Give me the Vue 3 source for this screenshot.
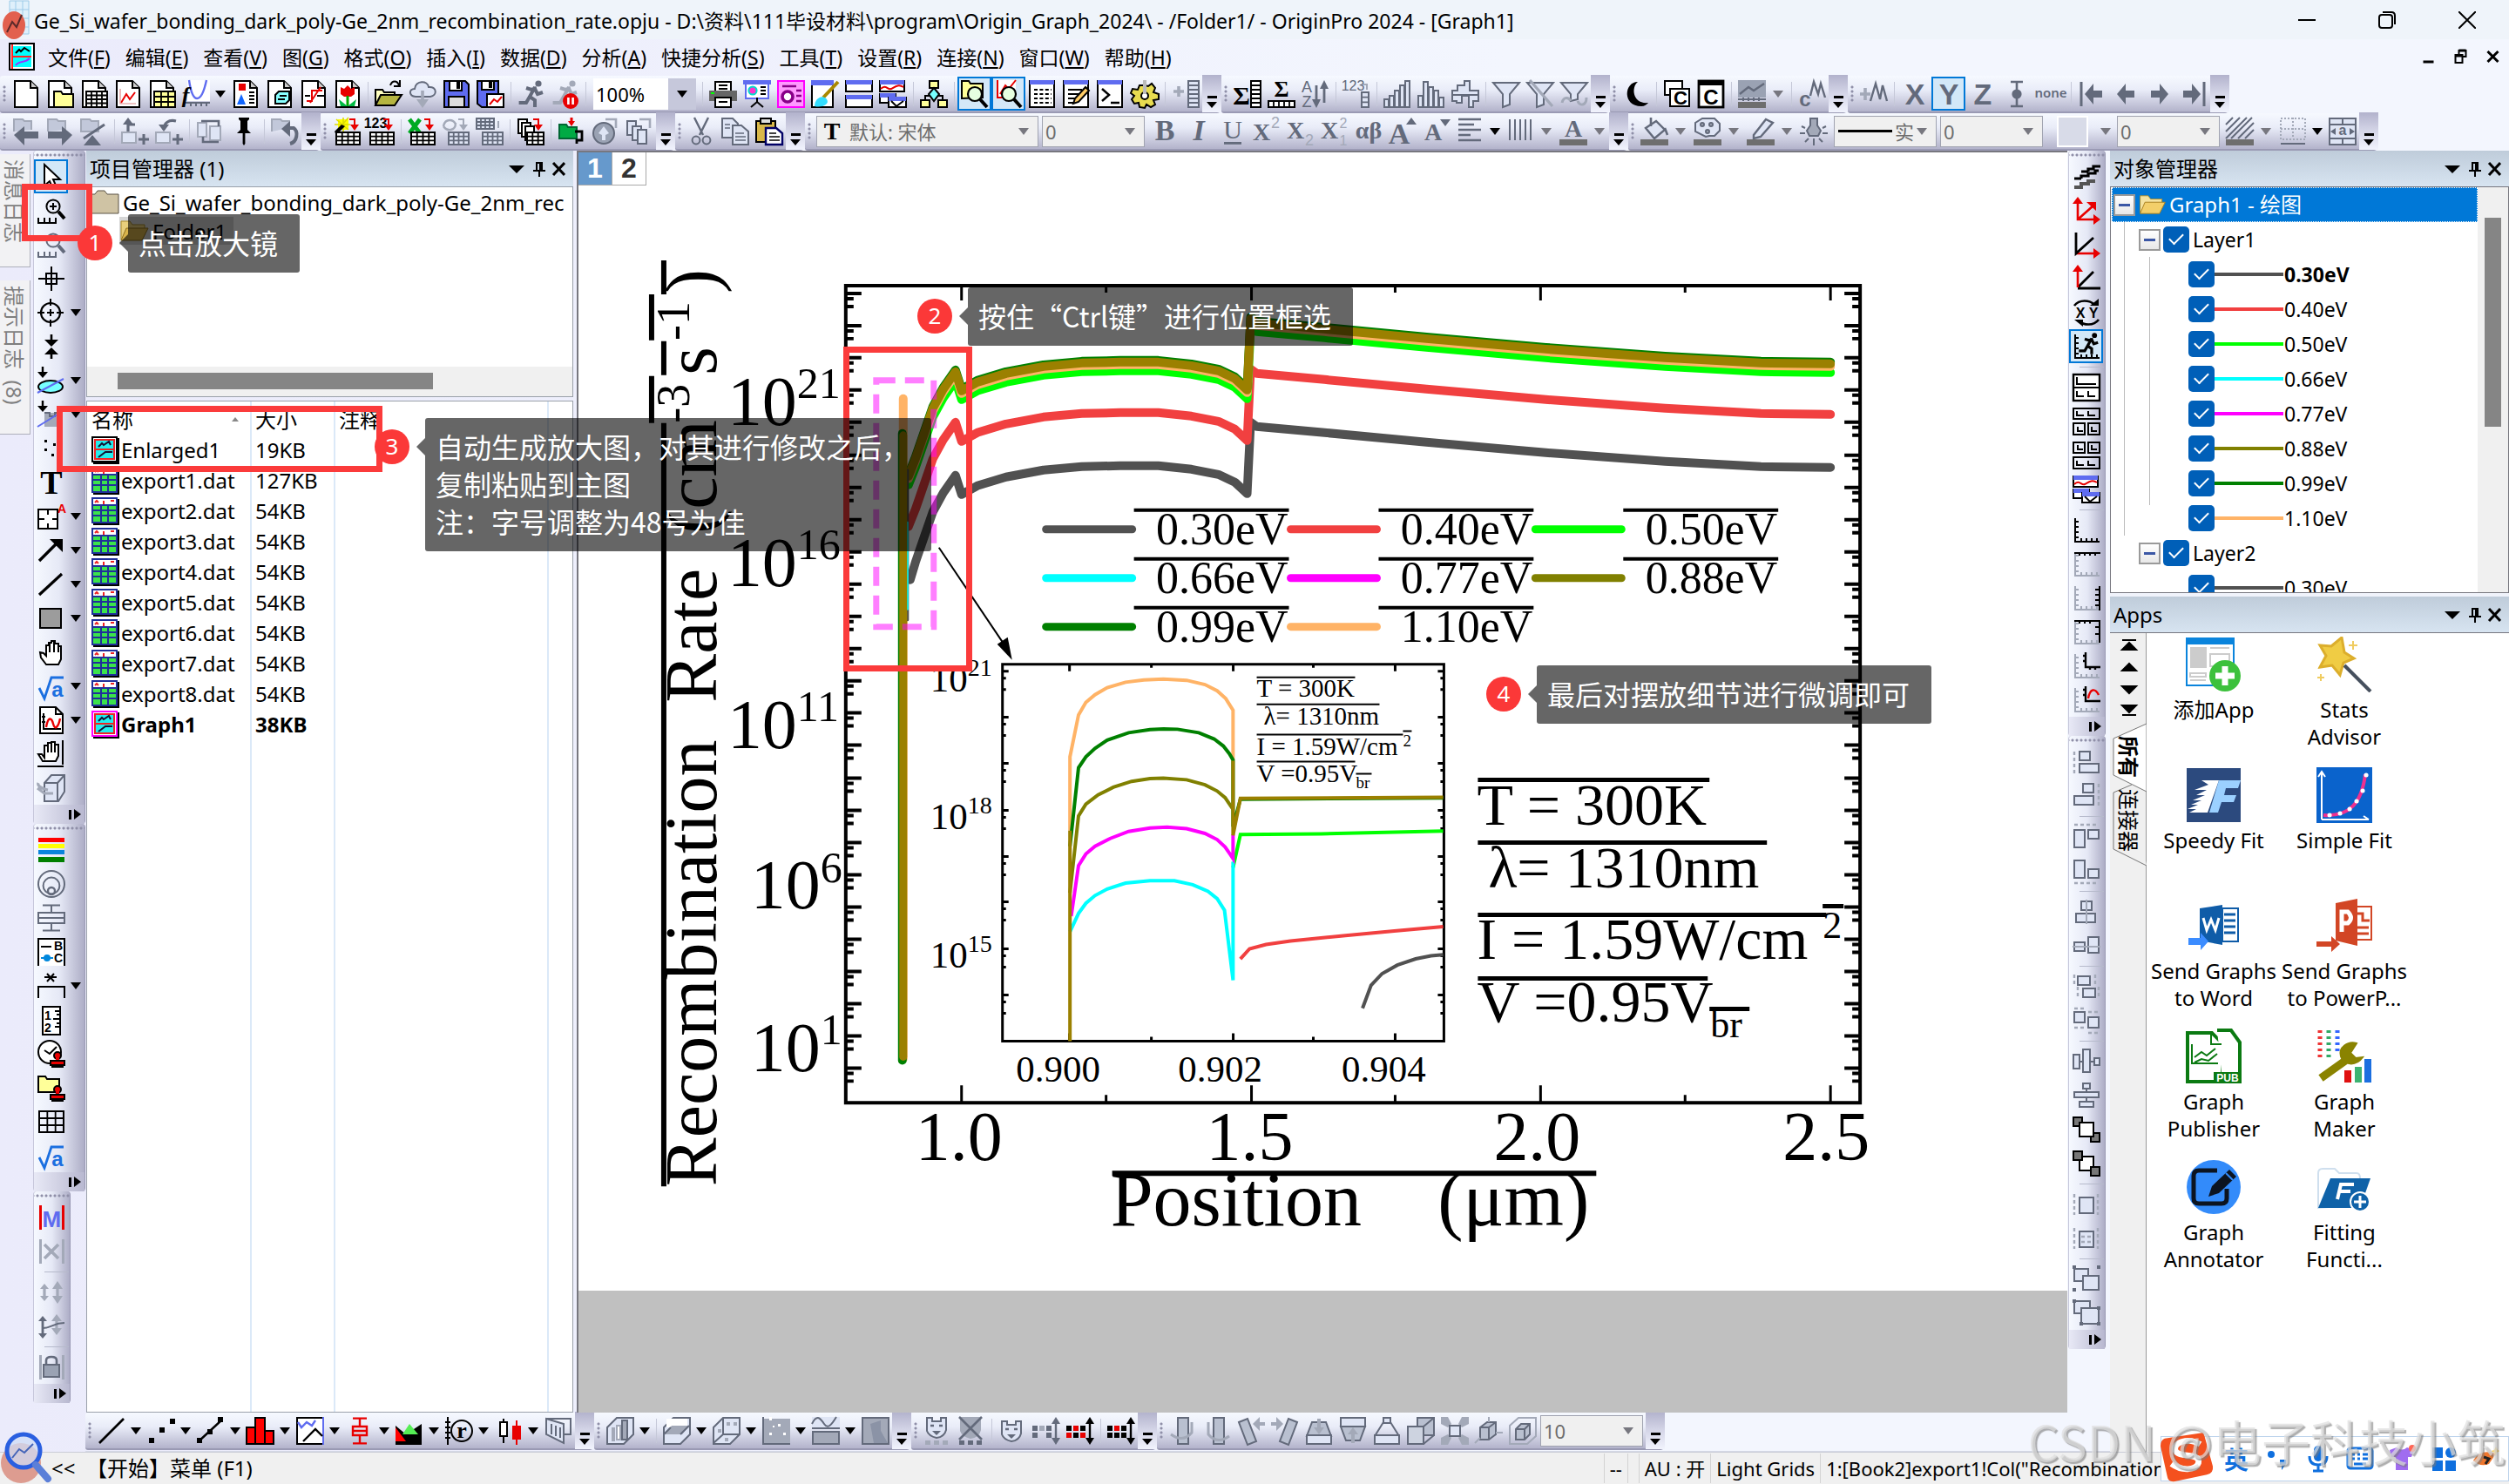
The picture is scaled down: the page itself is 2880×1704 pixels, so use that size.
<script setup>
import { h } from 'vue'

/* ---------- icon drawing helpers (16 x 16 grid) ---------- */
const K = '#000', G = '#636a7b', g = '#a3a9b8', F = '#dfe5f5', B = '#5f6cf0', R = '#e80000', Y = '#ffff99'
const p = (d, f = 'none', s = K, w = 1) => `<path d="${d}" fill="${f}" stroke="${s}" stroke-width="${w}"/>`
const f = (d, c = K) => `<path d="${d}" fill="${c}"/>`
const r = (x, y, w, hh, c = K) => `<rect x="${x}" y="${y}" width="${w}" height="${hh}" fill="${c}"/>`
const b = (x, y, w, hh, c = 'none', s = K, sw = 1) => `<rect x="${x}" y="${y}" width="${w}" height="${hh}" fill="${c}" stroke="${s}" stroke-width="${sw}"/>`
const c = (x, y, q, fill = 'none', s = K, w = 1) => `<circle cx="${x}" cy="${y}" r="${q}" fill="${fill}" stroke="${s}" stroke-width="${w}"/>`
const t = (x, y, s, size, fill = K, fam = 'Liberation Sans', wt = 400, st = 'normal') => `<text x="${x}" y="${y}" text-anchor="middle" font-size="${size}" fill="${fill}" font-family="${fam}" font-weight="${wt}" font-style="${st}">${s}</text>`
const page = p('M1.5.5h9l4 4v11h-13z', '#fff') + p('M10.5.5v4h4', '#ccc')
const grid = (x, y, w, hh, nx, ny, fill = '#fff', s = K) => {
  let d = ''
  for (let i = 1; i < nx; i++) d += `M${x + (w * i) / nx} ${y}v${hh}`
  for (let i = 1; i < ny; i++) d += `M${x} ${y + (hh * i) / ny}h${w}`
  return b(x, y, w, hh, fill, s) + p(d, 'none', s, 0.9)
}
const lens = (col = K, glass = '#e6ffe0') => c(8, 8, 4, glass, col, 1.1) + p('M11 11l4 4.5', 'none', col, 2)
const runner = (col) => p('M11 4.5L8 5.5l-3-1M10 4L7 9.5l3 2v4M7 9.5l-2 3.5H.8M10 5l1.5 3 3-1', 'none', col, 2) + c(12, 2, 1.8, col, col, 0)
const win = (x, y, w, hh) => b(x, y, w, hh, '#fff') + r(x, y - 0.5, w, 2.5, B)
const stamp = c(11.5, 9, 2, R) + f('M10.5 10h2v2.500h-2z', R) + b(7.5, 12, 8, 2.500, R) + p('M8 15.500h7', 'none', K)
const cubeG = (extra = '') => p('M.5 6L6 .5h9.5V10L10 15.500H.5z', F, G) + extra
const axes = (c1, c2, inner = '') => p('M1.500 1v13.500h14', 'none', c1) + p('M1.500 3h2M1.500 6h2M1.500 9h2M1.500 12h2M5 14.500v-2M8 14.500v-2M11 14.500v-2M14 14.500v-2', 'none', c2) + inner
const sqrt = p('M1 9l3 6L8 3h7', 'none', '#1b6fe0', 1.400) + t(11.5, 14, 'a', 12, '#1b6fe0', 'Liberation Sans', 700)
const boxes = (list, extra = '') => list.map((q) => b(q[0], q[1], q[2], q[3], F, G)).join('') + extra
const dash = (d) => `<path d="${d}" fill="none" stroke="${g}" stroke-width="1.200" stroke-dasharray="2 1.500"/>`
const down = (col) => p('M9.500 1h3v4', 'none', col) + f('M10 4h5l-2.500 3.500z', col)

const I = {
  new: page,
  nfold: page + p('M4.500 15.500v-9h4l1 1.500h6v7.500z', Y),
  nwks: page + grid(3.500, 6.500, 12, 9, 4, 4),
  ngraph: page + p('M4 13l3-5 2 3 3-4', 'none', R) + p('M3.500 5v8.500h9', 'none', '#d88', 0.6),
  nmtx: page + grid(3.500, 6.500, 12, 9, 3, 3, Y),
  func: r(3, 0, 13, 12, '#fff') + p('M4 0c2 14 7 14 10 0', 'none', B, 1.200) + p('M2 13h14M5 15v-2M8 15v-2M11 15v-2M14 15v-2', 'none', G) + t(2, 13, 'f', 13, K, 'Liberation Serif', 700, 'italic'),
  tmpl: page + r(4, 2, 4, 4, R) + f('M3 14l2.500-6L8 14z', '#16f') + p('M10 7h3M10 9h3M10 11h3M10 13h3', 'none', K, 1),
  notes: page + p('M5.500 13.500v-5l2-2h6v5l-2 2z', '#8ff') + p('M8 9h4M7 11h4'),
  lay: page + p('M4 12h3V6h6M6 13l6-9', 'none', R) + p('M3 9h3M10 9h4', 'none', K, 1),
  flower: page + f('M4 4l2 1 2-2 2 2 2-1v4l-2 1.500H6L4 8z', R) + p('M8 9v6', 'none', '#0a0', 1.500) + f('M3 11l5 4 5-4-1 4H4z', '#0b4'),
  open: p('M.5 14.500v-9h4l1 1.500h6v2', '#ffffc0') + p('M.5 14.500l3-6h12l-4 6z', '#b5b540') + p('M9 3c1-3 4-3 5 0M14.500 0v3.500H11', 'none', K),
  cloud: p('M4 9.500C0 9 0 5 3.500 5 4 0 11 0 11.500 4c5-.5 5 5 1 5.500z', F, G) + p('M8 6v7', 'none', g, 1.800) + f('M4.500 11h7L8 16z', g),
  save: p('M1 .5h12l2 2v13H1z', B) + b(4, .5, 7, 5.500, '#fff') + r(8, 1, 2, 4) + b(3.500, 9.500, 9, 6, '#ddd'),
  savet: p('M.5.5h12v15H3l-2.500-2z', B) + b(3, .5, 7, 5, '#fff') + r(7, 1, 2, 3.500) + b(6, 8, 9.500, 7.500, '#fff') + p('M7.500 14l2.500-3 2 1.500 2.500-3', 'none', R),
  run: runner(G), runstop: runner(g) + c(11, 12, 4, R, R) + p('M9.700 10v4M12.300 10v4', 'none', '#fff', 1.300),
  printer: b(3.500, 1, 9, 6, '#fff') + p('M5.500 3h5M5.500 5h5') + r(0, 6, 16, 6, '#666') + r(1, 7, 2, 1, '#0f0') + b(3.500, 10, 9, 5.500, '#fff') + p('M5.500 12.500h5'),
  slide: r(0, 0, 16, 2.500, B) + b(1.500, 2, 13, 8.500, '#fff', B) + c(5.500, 6, 2.300, '#f3c', '#0dc') + p('M10 4h3M10 6h3M10 8h3M8 10v3M4.500 15.500L8 12.500l3.500 3'),
  poster: b(.5, .5, 15, 15, '#f9f', '#f0f') + c(6, 9.500, 3, '#fff', '#808', 1.800) + p('M3 3.500h8M11 6h3M11 9h3M11 12h3', 'none', '#808', 1.200),
  brush: b(.5, 1, 12, 14.500, '#fff') + r(0, 0, 13, 3, B) + p('M15.500 1L7 10', 'none', '#a80', 2) + f('M2 15c0-5 5-7 7-4s-3 5-7 4z', '#3df'),
  win2: win(.5, .5, 15, 6) + win(.5, 9, 15, 6.500), wincurve: win(.5, .5, 14, 6) + p('M1 5c3-3 4 1 6 0s4-3 7-1', 'none', R) + win(.5, 8, 9, 5) + win(5.500, 10, 10, 5.500) + p('M7 12l3 3 4-3'),
  tree: p('M8 5v4M3 12.500V9h10v3.500') + b(5.500, .5, 5, 4, Y) + p('M8 4.500l3 3.500-3 4-3-4z', '#7ff') + b(.5, 11.500, 5, 4, Y) + b(10.500, 11.500, 5, 4, Y),
  fzoom: p('M.5 10.500V.5h4l1 1.500h7v8z', Y) + lens(), gzoom: r(2, 0, 10, 10, '#fff') + p('M1.500 0v10h3M3 8l3-5 2 2 4-5', 'none', R) + lens(),
  gridwin: win(.5, .5, 14, 15) + `<path d="M3 5.500h10M3 8h10M3 10.500h10M3 13h10" stroke="#000" stroke-dasharray="2 1.200"/>`,
  notewin: win(.5, .5, 14, 15) + p('M3 5.500h8M3 8h6M3 10.500h4M3 13h3') + p('M6 13.500l1-3L13 4l2 2-6 6.500z', '#fc6'),
  console: win(.5, .5, 14, 15) + p('M3 5l4 3.500L3 12M8 13h5', 'none', K, 1.300),
  gear: p('M8 3l2 .5L12 2l2 2.500L13 7l3 1v3l-3 .5L14 14l-2.500 1.500L9 14l-1 2-3-.5L4.500 13 2 13.500.500 11 2 9 0 7.500 1 5l3 .5L5 3z', '#e8dc50') + c(8, 9, 2, '#fff') + r(7, 0, 2, 8, '#bbb'),
  addcol: p('M1 6.500h6M4 3.500v6', 'none', g, 1.800) + grid(9.500, .5, 6, 15, 1, 6, F, G),
  sumcol: t(4.500, 14, 'Σ', 15, K, 'Liberation Serif', 700) + grid(10, .5, 5.500, 15, 1, 6), sum: t(8, 9.500, 'Σ', 13, K, 'Liberation Serif', 700) + grid(.5, 12, 15, 3.500, 5, 1),
  sortaz: t(3, 7, 'A', 9, G) + t(3, 15.500, 'Z', 9, G) + p('M8.500 3v9M13 3v10', 'none', G, 1.400) + f('M6 11h5l-2.500 5zM10.500 5h5L13 0z', G),
  n123: t(6, 6, '123', 8, G) + p('M12 2.500h2v3', 'none', g) + grid(11, 7, 4, 8.500, 1, 3, F, G),
  bars: [[0, 11, 4], [3, 9, 6], [6, 6, 9], [9, 3, 12], [12, .5, 15]].map((q) => b(q[0] + .5, q[1], 2.500, 15.500 - q[1], F, G)).join(''),
  hist: [[0, 9], [3, 1], [6, 4], [9, 6], [12, 10]].map((q) => b(q[0] + .5, q[1], 2.500, 15.500 - q[1], F, G)).join(''),
  hist2: p('M.5 12V6h3V3h4V.5h3V6h5v6h-3v3.500H10V9H6v4H3v-1z', F, G) + p('M0 8.500h16', 'none', G),
  filt: p('M.5 1.500h15L10 8v6l-4 1.500V8z', F, G), filtx: p('M.5 1.500h15L10 8v6l-4 1.500V8z', F, G) + p('M2 0l13 15', 'none', g, 1.600),
  filtr: p('M.5 1.500h15L10 8v3l-4 1V8z', F, G) + p('M1 13c1-4 4-3 5-1M15 10c0 5-4 5-5 2', 'none', g, 1.500),
  moon: f('M9 1c-8 0-9 14 2 14 2 0 3-1 4-2C6 14 5 4 9 1z'), c2: b(1, .5, 10, 8, '#fff') + b(4, 5, 11, 10, '#fff') + t(10, 14, 'C', 11, K, 'Liberation Sans', 700),
  cbox: b(1, .5, 14, 15, '#fff', K, 1.400) + r(1, 0, 14, 3) + t(8, 14, 'C', 12, K, 'Liberation Sans', 700),
  chartg: r(0, 0, 16, 10, '#9aa2b3') + p('M1 8l5-4 3 2 6-4', 'none', G, 1.200) + p('M0 11h16M3 10v2M6 10v2M9 10v2M12 10v2', 'none', G) + r(0, 12.500, 16, 3.500, '#6e6e6e'),
  cm: t(4, 15, 'c', 12, G, 'Liberation Sans', 700) + p('M7 9l2-8 2.500 7L13 2l2.500 8', 'none', G, 1.200), plusm: p('M0 8h6M3 4.500v7', 'none', g, 1.800) + p('M6 12l3-10 2.500 9L13 3l2.500 9', 'none', G, 1.200),
  X: t(8, 14, 'X', 17, G, 'Liberation Sans', 700), Yk: t(8, 14, 'Y', 17, G, 'Liberation Sans', 700), Z: t(8, 14, 'Z', 17, G, 'Liberation Sans', 700),
  ibeam: p('M4.500 1h7M8 1v14M4.500 15h7', 'none', G, 1.300) + c(8, 8, 2.300, G, G), none: t(8, 10, 'none', 7.500, G, 'Noto Sans', 600),
  first: p('M2 1v14', 'none', G, 1.500) + f('M4 8l5-6v4h5v4H9v4z', G), prev: f('M3 8l5-6v4h5v4H8v4z', G),
  next: f('M13 8L8 2v4H3v4h5v4z', G), last: f('M12 8L7 2v4H2v4h5v4z', G) + p('M14 1v14', 'none', G, 1.500),
  back: p('M1 8V1h5l1 1h4v5', '#c2c8da', g) + f('M1 10l6-5v3h8v4H7v4z', G), fwd: p('M1 8V1h5l1 1h4v5', '#c2c8da', g) + f('M15 10L9 5v3H1v4h8v4z', G),
  fup: p('M.5 8V1h5l1 1h4v6z', '#c2c8da', g) + p('M2 12L14 4', 'none', G, 1.500) + f('M2 16l5-6 5 6z', G),
  nup: p('M.5 8.500h8v6h-8z', F, g) + p('M4 8V4h4', 'none', G, 1.600) + f('M1 4h6L4 0z', G) + p('M10 12.500h6M13 9.500v6', 'none', G, 1.500),
  nup2: p('M.5 8.500h8v6h-8z', F, g) + p('M5 7c0-4 3-6 7-5', 'none', G, 1.600) + f('M2 4h6L5 8z', G) + p('M10 12.500h6M13 9.500v6', 'none', G, 1.500),
  cyc: b(1, 3, 5, 8, F, g) + b(8, 5, 6, 8, F, g) + p('M3 2h10v3M13 14H4v-3', 'none', G, 1.300), pin: f('M5 0h6v1l-1 1v5l2 2H8.700v6l-.7 1-.7-1V9H4l2-2V2L5 1z'),
  undo: p('M.5 8V1h5l1 1h4v4', '#c2c8da', g) + p('M9 6h4c3 2 2 8-2 9', 'none', G, 2) + f('M6 6.500L11 2v9z', G),
  wiz: r(3, 1, 6, 6, '#ff0') + p('M6 0v8M1 4h9M2 1l7 6M9 0L2 8', 'none', '#dd0', .8) + f('M1 8l4-4 2 1-5 5z') + down(R) + grid(2, 8.500, 13.500, 7, 4, 3),
  i123: t(5, 6, '123', 8, K, 'Liberation Sans', 700) + down(R) + grid(2, 8.500, 13.500, 7, 4, 3), xl: p('M1 1l6 8M7 1L1 9', 'none', '#0a2', 2.400) + down(R) + grid(2, 8.500, 13.500, 7, 4, 3),
  re1: p('M1 5c1-5 6-4 7-1M8 3c0 5-5 5-7 2', 'none', g, 1.200) + down(g) + grid(4, 8.500, 11.500, 7, 4, 3, F, G), re2: grid(.5, .5, 10, 6, 4, 3, F, G) + p('M13 2v4', 'none', g) + grid(4, 8.500, 11.500, 7, 4, 3, F, G),
  multi: b(1, 1, 5, 8, '#fff') + b(3, 3, 5, 8, '#fff') + b(5, 5, 5, 8, '#fff') + down(R) + grid(6, 8.500, 9.500, 7, 3, 3),
  db: p('M1 12V4h4l1 1.500h5V12z', '#0a4', '#063') + p('M8 0v3', 'none', R, 1.500) + f('M6 2h4L8 5z', R) + p('M10 8h4v5h-3v2', 'none', K, 1.400),
  globe: c(7, 9, 6, '#9aa2b3', G) + f('M4 9l3-4 3 4-2 1v3H6v-3z', F) + p('M8 1h6v5', 'none', g, 1.300), stack: b(1, 2, 5, 8, F, G) + b(4, 5, 5, 8, F, G) + b(7, 7, 5, 8, F, G) + p('M8 1h6v5', 'none', g, 1.300),
  cut: p('M4 0l5 10M12 0L7 10', 'none', G, 1.200) + c(5, 13, 2.200, 'none', G) + c(11, 13, 2.200, 'none', G),
  copy: p('M.5.5h6l3 3v8h-9z', F, G) + p('M6.500 4.500h5l4 3.500v7.500h-9z', F, G) + p('M8 9h5M8 11h6M8 13h6M2 4h3M2 6h3', 'none', G, .8),
  paste: b(.5, 2, 11, 12, '#d9b84a') + b(3, .5, 6, 3, '#ddd') + p('M6 6h6l3.500 3v6.500H6z', '#fff', '#006', 1.200) + p('M8 9h4M8 11h6M8 13h6', 'none', K, .8),
  bold: t(8, 13, 'B', 17, G, 'Liberation Serif', 700), ital: t(8, 13, 'I', 17, G, 'Liberation Serif', 700, 'italic'), und: t(8, 12, 'U', 15, G, 'Liberation Serif', 400) + r(3, 14, 10, 1.400, G),
  sup: t(5, 13, 'X', 14, G, 'Liberation Serif', 700) + t(13, 6, '2', 9, g), sub: t(5, 12, 'X', 14, G, 'Liberation Serif', 700) + t(13, 16, '2', 9, g), supsub: t(5, 12, 'X', 14, G, 'Liberation Serif', 700) + t(13, 6, '2', 8, g) + t(13, 16, '1', 8, g),
  ab: t(8, 12, 'αβ', 14, G, 'Liberation Serif', 700), Aup: t(6, 15, 'A', 17, G, 'Liberation Serif', 700) + f('M10 4h6l-3-4z', G), Adn: t(6, 13, 'A', 14, G, 'Liberation Serif', 700) + f('M10 1h6l-3 4z', G),
  align: p('M1 1h13M1 4h9M1 7h13M1 10h7M1 13h13', 'none', G, 1.200), vlines: p('M2 1v12M5 1v12M8 1v12M11 1v12M14 1v12', 'none', G, 1), Acol: t(8, 11, 'A', 14, G, 'Liberation Serif', 700) + r(0, 12.500, 16, 3.500, '#6e6e6e'),
  bucket: p('M3 6l6-4 5 5-6 5z', F, G, 1.200) + p('M6 0v5M14 6l1.500 4', 'none', G, 1.300) + r(0, 12.500, 16, 3.500, '#6e6e6e'), palette: p('M5 .5h7l3 3v4l-3 3H9L7 11 1 8V3z', F, G) + c(5, 4, 1, g, G) + c(10, 4, 1, g, G) + c(8, 8, 1, g, G) + r(0, 12.500, 16, 3.500, '#6e6e6e'),
  pen: p('M4 10l7-9 4 2-7 8-4 1z', F, G, 1.200) + r(0, 12.500, 16, 3.500, '#6e6e6e'), bulb: p('M6 .5h4v4l2 3-1.500 3h-5L4 7.500l2-3z', g, G) + p('M0 9h3M13 9h3M1 5l2 1M15 5l-2 1M3 14l2-2M13 14l-2-2M8 12v4', 'none', G),
  hatch: p('M0 4l4-4M0 8l8-8M0 12L12 0M3 12L15 0M7 12l9-9M11 12l5-5', 'none', G, 1) + r(0, 12.500, 16, 3.500, '#6e6e6e'), border: `<path d="M1 .5h14v12H1zM8 0v12M1 6.500h14" fill="none" stroke="${g}" stroke-dasharray="1 1"/>` + p('M1 15h14', 'none', G), cellw: b(.5, .5, 15, 15, F, G) + p('M.5 4h15M.5 12h15M8 0v4M8 12v4', 'none', G) + t(8, 10, 'a', 8, G, 'Liberation Sans', 700) + f('M1 8l3-2v4zM15 8l-3-2v4z', G),
  cursor: p('M4 1v12l3-2.500 2 4.500 2-1-2-4.500h4z', '#fff'), zin: c(9, 5.500, 3.800) + p('M9 3.500v4M7 5.500h4') + p('M12 8.500l3.500 4', 'none', K, 2) + p('M.5 12v3h10v-3M4 12v3M7 12v3'),
  zout: c(9, 5.500, 3.800, 'none', G) + p('M12 8.500l3.500 4', 'none', G, 2) + p('M.5 12v3h10v-3M4 12v3M7 12v3', 'none', G),
  cross: p('M8 1v14M.500 8h15', 'none', K, 1) + b(5, 5, 6, 6), target: c(7.500, 8, 5.500, 'none', K, 1.100) + p('M7.500 0v4M7.500 12v4M0 8h4M11 8h4M7.500 6v4M5.500 8h4'),
  darr: p('M8 1v4M8 11v4', 'none', K, 1.300) + f('M4 4h8L8 8zM4 12.500h8L8 8.500z'), ell: `<ellipse cx="7.500" cy="11.500" rx="7" ry="3.500" fill="#7ff" stroke="#000"/>` + p('M0 15L15 7', 'none', B) + p('M3 0v3', 'none', K, 1.200) + f('M0 3h6L3 6.500z'),
  maskd: r(4, 7, 10, 8, g) + p('M4 7h3v2h3V7h4', 'none', G) + p('M0 15L13 7', 'none', B) + p('M3 0v3', 'none', K, 1.200) + f('M0 3h6L3 6.500z'),
  dots: r(4, 3, 1.500, 1.500) + r(9, 5, 1.500, 1.500) + r(4, 8, 1.500, 1.500) + r(12, 7, 1.500, 1.500) + r(8, 11, 1.500, 1.500) + r(12, 3, 1, 1), T: t(8, 14.500, 'T', 19, K, 'Liberation Serif', 700),
  annot: b(.5, 4, 11, 11, '#fff') + p('M6 4v3M6 12v3M.5 9.500h3M8.500 9.500h3M3 9.500h1') + t(14, 6, 'A', 7, R, 'Liberation Sans', 700), arr: p('M1 14L11 4', 'none', K, 1.700) + f('M7 1.500h7.500V9z'),
  line: p('M1 14L14 2', 'none', K, 1.600), rect: b(1.500, 2.500, 12, 11, '#9c9c9c'), hand: p('M5 15l-3-4-.5-3 2 .5L5 10V4h1.500V2.500H8V1.500h2V3h2v1.500h1.500V12L12 15z', '#fff') + p('M7 3v5M9.500 2v6M12 4v4'),
  sqrt, chartp: p('M1.500.5h9l4 4v11h-13z', '#fff') + p('M10.500.5v4h4M3.500 4v9h10M2.500 6h2M2.500 9h2') + p('M5 12c1-6 3-6 4-2s3 2 4-3', 'none', R, 1.200), handz: p('M3 12L.5 8l2 0L4 10V3h2V1.500h2V1h2v1.500h2V9l-1.500 3z', '#fff') + p('M6 3v4M8 2v5M10 3v4M14.500 0v14M0 15h15'),
  cube: p('M4 5l4-4.500h7.500V10L12 15.500H4z', F, G) + p('M4 5h7.500v10M11.500 5l4-4.500', 'none', G) + p('M6 9C1 8 0 6 .5 5M0 8l4 3h5', 'none', g, 1.600),
  stripes: r(.5, 1, 15, 2.500, '#f00') + r(.5, 4.500, 15, 2.500, '#ff0') + r(.5, 8, 15, 2.500, '#0a84dc') + r(.5, 12, 15, 3, '#008000'), rings: c(8, 8, 7.500, 'none', G) + c(8, 9, 4.700, 'none', G) + c(8, 12, 2, 'none', G, 1.200),
  box3: p('M3 .8h10M8 1v4M8 11v4M3 15.200h10M.5 5h15v6H.5zM.5 8h15', 'none', G), legend: p('M.5 16V.5h15V16', '#fff') + p('M2 5h6') + t(12, 7, 'B', 7, K, 'Liberation Sans', 700) + t(12, 14, 'C', 7, K, 'Liberation Sans', 700) + p('M2 11.500h7', 'none', '#08d') + c(5.500, 11.500, 1.500, '#08d', '#08d'),
  star: p('M4 3h7M5.500 1l4 4.500M9.500 1l-4 4.500M.5 15V8.500h15V15'), ruler: b(3, .5, 10, 16, '#fff') + t(6, 8, '1', 7, K, 'Liberation Sans', 700) + t(6, 15, '2', 7, K, 'Liberation Sans', 700) + p('M10 3h3M11 5h2M9 7.500h4M11 10h2M10 12h3'),
  clock: c(7, 7, 6.500, '#fff') + p('M4 6l3 2 4-4') + stamp, stampf: p('M.5 10.500v-9h4l1 1.500h7v7.500z', '#ff9') + stamp, table: grid(1, 2, 14, 12, 3, 3, 'none'),
  M: r(1, 1, 1.500, 14, R) + r(14, 1, 1.500, 14, R) + t(8.200, 13.500, 'M', 13, B, 'Liberation Sans', 700), Xb: r(1, 1, 1.500, 14, g) + r(14, 1, 1.500, 14, g) + p('M4 4l8 8M12 4l-8 8', 'none', g, 1.800),
  ud: p('M4 5v6M11.500 4v8', 'none', g, 1.600) + f('M1.500 6L4 3l2.500 3zM1.500 10L4 13l2.500-3zM8.500 6L11.500 1.500l3 4.500zM8.500 10l3 4.500 3-4.500z', g), udl: p('M3 4v9', 'none', G, 1.400) + p('M11 3v8', 'none', g, 1.600) + f('M.5 5L3 2l2.500 3zM.5 12L3 15l2.500-3z', G) + f('M8 5l3-4 3 4zM8 9l3 4 3-4z', g) + p('M3 9c5 0 6-3 12.500-3', 'none', G),
  lock: r(1, 1, 1.500, 14, g) + r(14, 1, 1.500, 14, g) + p('M5 7V4q0-2 3-2t3 2v3', 'none', G, 1.300) + b(3.500, 6.500, 9, 7, '#9aa2b3', G),
  plane: `<g stroke-dasharray="4 0">${p('M5 5h4V3.500h3V2h4M1 9h4V7.500h4V6h4V4.500h2', 'none', K, 1.600)}</g>` + p('M1 14h4v-2h4v-1.500h4', 'none', '#555', 2), ax3: p('M3 2v11h11M3 13L12 5', 'none', R, 1.300) + f('M0 4l3-4 3 4zM12 10l4 3-4 3zM8 3h5.500v5z', R), ax2: p('M2 13h11', 'none', R, 1.300) + p('M2 1v12L12 4', 'none', K, 1.400) + f('M12 10l4 3-4 3z', R), ax1: p('M3 13L12 4M3 13.500h13', 'none', K, 1.400) + p('M3 2v11', 'none', R, 1.300) + f('M0 4l3-4 3 4z', R),
  xy: t(4.500, 11, 'X', 8, K, 'Liberation Sans', 700) + t(12, 11, 'Y', 8, K, 'Liberation Sans', 700) + p('M1 4c3-4 9-3 11-1M15 12c-3 4-9 3-11 1', 'none', K, 1.300) + f('M10 4h5V0zM1 12h5v4z'), runax: axes(K, K) + `<g transform="translate(3 0) scale(.8)">${runner(K)}</g>`,
  l1: b(.5, .5, 15, 15, '#fff', K, 1.200) + p('M2.500 2v4h11M0 8h16M2.500 10v3h4M9 10v3h4'), l2: b(.5, .5, 15, 6) + b(.5, 9, 6.500, 6.500) + b(9, 9, 6.500, 6.500) + p('M2.500 2v2.500h4M9 2v2.500h4M3 11v2.500h3M11 11v2.500h3'), l3: b(.5, 9, 15, 6.500) + b(.5, .5, 6.500, 6) + b(9, .5, 6.500, 6) + p('M2.500 11v2.500h4M9 11v2.500h4M3 2v2.500h3M11 2v2.500h3'),
  a1: axes(K, K), a2: axes(g, g, p('M1 1.500h15M4 1v2M7 1v2M10 1v2M13 1v2')), a3: axes(g, g, p('M15.500 1v14M13 3h2M13 6h2M13 9h2M13 12h2')), a4: axes(g, g, p('M1 1.500h14.500V14M4 1v2M7 1v2M10 1v2M13 5h2M13 9h2')),
  a5: axes(g, g, p('M7.500 0v8.500H16M6 2h2M6 5h2M10 8v2M13 8v2', 'none', K, 1.200)), a6: axes(g, g, p('M7.500 0v8.500H16M6 2h2M6 5h2', 'none', K, 1.200) + p('M9 7c1-6 4-6 6-2', 'none', R, 1.200)),
  g1: boxes([[4, 2, 6, 5], [4, 9, 11, 5]], dash('M1 2v13')), g2: boxes([[6, 1, 6, 5], [1, 8, 11, 5]], dash('M15 1v13')), g3: boxes([[1, 4, 6, 10], [9, 4, 6, 5]], dash('M1 1h14')), g4: boxes([[1, 2, 6, 10], [9, 7, 6, 5]], dash('M1 15h14')),
  g5: boxes([[5, 2, 6, 5], [2, 9, 11, 5]], p('M8 1v14', 'none', g)), g6: boxes([[1, 6, 6, 5], [9, 3, 6, 9]], p('M0 8.500h16', 'none', g)), g7: boxes([[3, 2, 7, 5], [6, 9, 7, 5]], dash('M1 1v6M13 1v6M3 8v6M15 8v6')), g8: boxes([[1, 3, 6, 6], [9, 6, 6, 6]], dash('M1 1h6M9 3h6M1 12h6M9 15h6')),
  g9: p('M3 8h11', 'none', G) + boxes([[.5, 4, 3.500, 8], [6, 1, 4, 13], [12.500, 6, 3, 4]]), g10: p('M8 3v11', 'none', G) + boxes([[6, 1, 4, 3], [1, 6, 14, 3], [4, 11.500, 8, 3]]),
  g11: b(.5, 1, 5, 5, '#777') + b(10.500, 10, 5, 5, '#777') + b(4, 4, 8, 8, '#fff'), g12: b(4, 4, 8, 8, '#fff') + b(.5, 1, 5, 5, '#777') + b(10.500, 10, 5, 5, '#777'),
  g13: boxes([[4, 4, 8, 9]], dash('M1 2v12M14.500 2v12')), g14: boxes([[4, 4, 8, 9]], dash('M1 2v12M14.500 2v12M5 7h6M5 10h6')), g15: boxes([[1, 2, 8, 7], [6, 6, 9, 8]], r(0, 0, 2, 2, G) + r(14, 0, 2, 2, G) + r(0, 13, 2, 2, G)), g16: boxes([[1, 1, 9, 7], [5, 5, 10, 9]], r(0, 0, 2, 2, G) + r(4, 13, 2, 2, G) + r(14, 13, 2, 2, G) + r(14, 4, 2, 2, G)),
  p1: p('M1 15L15 1', 'none', K, 1.300), p2: r(1, 12, 3, 3) + r(7, 6, 3, 3) + r(13, 1, 3, 3), p3: p('M1 14L14 2', 'none', K, 1.200) + r(0, 12, 3, 3) + r(6, 7, 3, 3) + r(12, 0, 3, 3), p4: b(0, 6, 5, 9.500, '#f00') + b(5, .5, 5.500, 15, '#f00') + b(10.500, 8, 5, 7.500, '#f00'),
  p5: b(.5, .5, 15, 15, '#fff') + p('M15.500 0v16', 'none', B) + p('M1 3l2 3 3-3 3 2 2-3', 'none', B, 1.200) + p('M4 14l3-3 4-4 4 4', 'none', K, 1.200), p6: p('M4 .8h8M8 1v4M4 5.500h8v5H4zM4 8h8M8 11v4M4 15.200h8', 'none', R, 1.200),
  p7: f('M0 5l6 5 3-2 6-4v12H0z') + f('M0 6l6 8H0z', '#f00') + f('M4 10l4-6 5 6z', '#5e5'), p8: p('M1.500 0v16M0 3h3M0 6h3M0 9h3M0 12h3') + c(9.500, 8, 6) + t(9.500, 12, 'r', 13, K, 'Liberation Serif', 700), p9: p('M5 1v14') + b(3, 3, 4, 8, '#fff') + p('M12.500 2v14', 'none', R) + r(10, 5, 5, 8, R), p10: p('M1 1l10 3v11L1 10z', F, G) + p('M1 1h14v9h-4M4 4v6M6.500 5v6M9 6v6', 'none', G),
  q1: cubeG(b(6, 5, 2, 8, '#fff', g) + b(9, 2, 3, 11, g, G) + p('M4 6v8', 'none', g, 2)), q2: cubeG(r(2, 1, 12, 5, '#fff') + f('M1 10l4-5h10l-4 5z', g) + p('M.5 10l4-4M10 10l5-5', 'none', G)), q3: cubeG(p('M6 .5V10h9.500M6 10L.5 15', 'none', G) + r(8, 3, 2, 2, g) + r(12, 3, 2, 2, g) + r(3, 7, 2, 2, g) + r(7, 12, 2, 2, g)),
  q4: r(1, 1, 15, 14, g) + p('M.5 0v15.500H16', 'none', G) + r(4, 0, 1.500, 2, '#fff') + r(9, 4, 1.500, 1.500, '#fff') + r(4, 9, 1.500, 1.500, '#fff') + r(12, 9, 1.500, 1.500, '#fff') + r(6, 5, 1, 1, '#fff'), q5: r(0, 0, 16, 6, F) + p('M0 4c3-6 5-3 7 0s4 1 7-4M0 6.500h16', 'none', G) + b(.5, 8.500, 15, 7, g, G) + dash('M2 11h12M2 13.500h12'), q6: b(.5, .5, 15, 15, g, G) + f('M5 4l6-2v6l4 7H7z', '#8b93a6'),
  m1: p('M2 .5h3v2h5v-2h3v7q-1 4-5.500 4.500Q3 11 2 8z', F, G) + p('M4 5h2M9 5h2', 'none', G, 1.300) + f('M5 8h5l-2.500 2.500z', G) + r(1, 13.500, 3, 2.500, g) + r(6, 13.500, 3, 2.500, g) + r(11, 13.500, 3, 2.500, g), m2: p('M2 .5h11v7q-1 4-5.500 4.500Q3 11 2 8z', g, g) + p('M1 0l13 13M14 0L1 13', 'none', G, 1.300) + r(1, 13.500, 3, 2.500, G) + r(6, 13.500, 3, 2.500, G) + r(11, 13.500, 3, 2.500, G), m3: p('M2 2.500h3v2h5v-2h3v7q-1 4-5.500 4.500Q3 13 2 10z', F, G) + p('M4 7h2M9 7h2', 'none', G, 1.300) + f('M5 10h5l-2.500 2.500z', G),
  m4: r(0, 5, 3, 3, G) + r(4, 5, 3, 3, g) + r(8, 5, 3, 3, G) + r(0, 9, 3, 3, G) + r(8, 9, 3, 3, G) + p('M13.500 2v12', 'none', G, 1.200) + f('M11 4h5l-2.500-4zM11 12h5l-2.500 4z', G), m5: r(0, 5, 3, 3) + r(4, 5, 3, 3, R) + r(8, 5, 3, 3) + r(0, 9, 3, 3, R) + r(4, 9, 3, 3) + r(8, 9, 3, 3, R) + p('M13.500 2v12', 'none', K, 1.200) + f('M11 4h5l-2.500-4zM11 12h5l-2.500 4z'), m6: r(0, 5, 3, 3) + r(4, 5, 3, 3, R) + r(8, 5, 3, 3) + r(0, 9, 3, 3) + r(4, 9, 3, 3) + r(8, 9, 3, 3) + p('M13.500 2v12', 'none', K, 1.200) + f('M11 4h5l-2.500-4zM11 12h5l-2.500 4z'),
  r1: b(5, .5, 6, 15, '#b9c0d0', G) + p('M1 10q7 5 12-1V3', 'none', g, 1.500), r2: b(6, .5, 6, 15, '#b9c0d0', G) + p('M15 11q-7 5-12-1V3', 'none', g, 1.500), r3: p('M1 3l5-2 5 13-5 2z', '#b9c0d0', G) + f('M16 3h-3V0L9 4l4 4V5h3z', g), r4: p('M15 3l-5-2-5 13 5 2z', '#b9c0d0', G) + f('M0 3h3V0l4 4-4 4V5H0z', g),
  r5: p('M4 3h8l3 8H1z', '#b9c0d0', G) + b(1, 10.500, 14, 5, F, G) + f('M7 1h2v5h2l-3 4-3-4h2z', g), r6: b(1, .5, 14, 5, F, G) + p('M1 5.500h14l-3 8H4z', '#b9c0d0', G) + f('M7 15h2v-5h2L8 6l-3 4h2z', g), r7: p('M6 3L1 11M10 3l5 8', 'none', G) + b(6, .5, 4, 3, F, G) + b(1, 10.500, 14, 5, F, G), r8: b(6, .5, 9.500, 10, '#b9c0d0', G) + b(.5, 5.500, 9, 10, '#cdd3e0', G) + p('M9.500 5.500l6-5M9.500 15.500l6-5', 'none', G), r9: f('M0 0h4l2 4-2 2-4-2zM16 0h-4l-2 4 2 2 4-2zM0 16h4l2-4-2-2-4 2zM16 16h-4l-2-4 2-2 4 2z', g) + b(5, 5, 6, 6, F, G),
  r10: p('M3 6l4-3h5v7l-4 3H3zM3 6h5v7M8 6l4-3', '#b9c0d0', G) + p('M8 0v3M12 9h4M0 15l3-3', 'none', g), r11: p('M.5 5l5-4.500h10V11l-5 4.500H.5z', 'none', g) + p('M4 7l3-3h5v6l-3 3H4zM4 7h5v6M9 7l3-3', '#b9c0d0', G),
}

/* ---------- reusable pieces ---------- */
const Icon = (props) => h('svg', { class: 'ic', viewBox: '0 0 16 16', 'aria-hidden': 'true', innerHTML: I[props.n] || '' })
Icon.props = ['n']

const tri = (cls) => h('span', { class: ['tri', cls] })
const button = (name) => {
  const on = name[0] === '*'
  const n = on ? name.slice(1) : name
  return h('button', { class: ['btn', { on }], type: 'button', 'aria-label': n }, [h(Icon, { n })])
}
const combo = (spec) => {
  const [, text, cls] = spec.split('~')
  return h('span', { class: ['combo', cls] }, [
    cls.includes('tt') ? h('b', { class: 'ttf' }, 'T') : null,
    cls.includes('ls') ? h('i', { class: 'stroke' }) : null,
    h('select', { 'aria-label': cls }, [h('option', text.replace('_', ' '))]),
    tri(cls.includes('zoom') ? '' : 'dim'),
  ])
}
const item = (k) => {
  if (k === '|') return h('span', { class: 'sep' })
  if (k === '>') return h('button', { class: 'drop', type: 'button', 'aria-label': 'more' }, [tri('')])
  if (k === '>>') return h('button', { class: 'drop wide', type: 'button', 'aria-label': 'more' }, [tri('dim')])
  if (k[0] === '~') return combo(k)
  if (k.length > 1 && k.endsWith('>')) return h('span', { class: 'pair' }, [button(k.slice(0, -1)), item('>')])
  return button(k)
}
const ToolBar = (props) =>
  h('div', { class: ['bar', props.side ? 'side' : 'flat'], role: 'toolbar' }, [
    h('span', { class: 'grip' }),
    ...props.t.split(' ').map(item),
    h('button', { class: 'over', type: 'button', 'aria-label': 'options' }, [h('i'), h('b')]),
  ])
ToolBar.props = ['t', 'side']

const topRows = [
  [
    'new nfold nwks ngraph nmtx func > tmpl notes lay flower | open cloud save savet | run runstop | ~100%~zoom | printer slide poster brush win2 wincurve | tree | *fzoom *gzoom gridwin notewin console gear | addcol',
    'sumcol sum sortaz | n123 | bars hist hist2 | filt filtx filtr',
    'moon | c2 cbox | chartg >> | cm',
    'plusm | X *Yk Z ibeam none | first prev next last',
  ],
  [
    'back fwd fup | nup nup2 | cyc pin | undo',
    'wiz i123 | xl re1 re2 | multi | db globe stack',
    'cut copy paste',
    '~默认:_宋体~tt ~0~size bold ital und sup sub supsub ab Aup Adn align > vlines >> Acol >>',
    'bucket >> palette >> pen >> bulb ~实~ls ~0~size ~_~swatch ~0~size hatch >> border > cellw',
  ],
]
const leftBars = [
  '*cursor zin zout cross target> darr ell> maskd> dots T annot> arr> line> rect> hand sqrt> chartp> handz cube',
  'stripes rings box3 legend star> ruler clock stampf table sqrt',
  'M Xb | ud udl | lock',
]
const rightBars = [
  'plane ax3 ax2 ax1 xy *runax | l1 l2 l3 wincurve | a1 a2 a3 a4 a5 a6',
  'g1 g2 | g3 g4 | g5 g6 | g7 g8 | g9 g10 g11 g12 | g13 g14 | g15 g16',
]
const bottomBars = [
  'p1 > p2 > p3 > p4 > p5 > p6 > p7 > p8 > p9 > p10',
  'q1 > | q2 > q3 > q4 > q5 > q6',
  'm1 m2 | m3 m4 m5 | m6',
  'r1 r2 r3 r4 r5 r6 r7 r8 r9 r10 r11 ~10~size',
]

const menus = [['文件', 'F'], ['编辑', 'E'], ['查看', 'V'], ['图', 'G'], ['格式', 'O'], ['插入', 'I'], ['数据', 'D'], ['分析', 'A'], ['快捷分析', 'S'], ['工具', 'T'], ['设置', 'R'], ['连接', 'N'], ['窗口', 'W'], ['帮助', 'H']]

const files = [
  { n: 'Enlarged1', s: '19KB', g: 1 },
  { n: 'export1.dat', s: '127KB' },
  ...[2, 3, 4, 5, 6, 7, 8].map((i) => ({ n: `export${i}.dat`, s: '54KB' })),
  { n: 'Graph1', s: '38KB', g: 1, bold: 1 },
]

const plots = [
  ['0.30eV', '#515151'], ['0.40eV', '#f14040'], ['0.50eV', '#00ff00'], ['0.66eV', '#00ffff'],
  ['0.77eV', '#ff00ff'], ['0.88eV', '#808000'], ['0.99eV', '#008000'], ['1.10eV', '#ffb366'],
]
const apps = [
  ['添加App', 'add'], ['Stats\nAdvisor', 'wand'], ['Speedy Fit', 'speedy'], ['Simple Fit', 'simple'],
  ['Send Graphs\nto Word', 'word'], ['Send Graphs\nto PowerP...', 'ppt'], ['Graph\nPublisher', 'pub'],
  ['Graph\nMaker', 'maker'], ['Graph\nAnnotator', 'annot'], ['Fitting\nFuncti...', 'fit'],
]
const appArt = {
  add: '<rect x="1" y="2" width="54" height="54" fill="#fff" stroke="#0a84dc" stroke-width="2"/><rect y="1" width="56" height="8" fill="#0a84dc"/><rect x="5" y="12" width="19" height="24" fill="#ccc"/><path d="M28 13h22M28 20h22v14H28zM5 42h18v4H5zM5 50h18" fill="none" stroke="#ccc" stroke-width="2"/><circle cx="45" cy="45" r="18" fill="#3cc13c"/><path d="M45 34v22M34 45h22" stroke="#fff" stroke-width="7"/>',
  wand: '<path d="M29 1l3 17 11 7-12 5-4 14-9-11-14 2 7-13L4 10l13 1z" fill="#f0cc44" stroke="#dcae2c" stroke-width="3"/><path d="M32 33l30 30" stroke="#46505e" stroke-width="4"/><path d="M42 5v10M37 10h10M5 43v8M1 47h8" stroke="#f0cc60" stroke-width="2"/>',
  speedy: '<rect x="1" y="1" width="62" height="62" fill="#2c4a7e"/><path d="M18 15h20L25 52H4l8-4H2l12-5H6l12-5H8l14-6H12l12-6H10l16-6z" fill="#fff"/><path d="M38 15h25l-3 9H46l-2 8h14l-3 8H41l-4 12H27z" fill="#9bd0ff"/>',
  simple: '<rect width="64" height="64" fill="#0a63cc"/><path d="M6 60V6M6 60h54M2 11l4-6 4 6M54 56l6 4" stroke="#fff" stroke-width="2" fill="none"/><path d="M8 55c30 2 44-14 48-47" fill="none" stroke="#f03090" stroke-width="4"/><path d="M15 55h.1M27 53h.1M38 48h.1M46 39h.1M53 27h.1M57 9h.1" stroke="#fff" stroke-width="5" stroke-linecap="round"/>',
  word: '<path d="M42 12h18v38H42z" fill="#fff" stroke="#0f5ca8" stroke-width="2"/><path d="M44 19h13M44 26h13M44 33h13M44 40h13" stroke="#0f5ca8" stroke-width="3"/><path d="M16 12l26-4v46l-26-5z" fill="#0f5ca8"/><path d="M20 23l4 14 5-12 5 12 4-14" fill="none" stroke="#fff" stroke-width="3"/><path d="M3 46h14v-6l9 10-9 10v-6H3z" fill="#3b8cff"/>',
  ppt: '<path d="M42 10h21v38H42z" fill="#fff" stroke="#d24625" stroke-width="2"/><path d="M45 18h8v8h8M45 34h15M45 41h15" fill="none" stroke="#d24625" stroke-width="3"/><path d="M22 6l25-5v54l-25-6z" fill="#d24625"/><path d="M29 39V16h7q7 7 0 13h-7" fill="none" stroke="#fff" stroke-width="5"/><path d="M0 50h17v-6l10 9-10 9v-6H0z" fill="#d24625"/>',
  pub: '<path d="M2 5h28l12 12v44H2z" fill="#fff" stroke="#0b7a12" stroke-width="4"/><path d="M36 2h16l10 14v45H42" fill="#fff" stroke="#0b7a12" stroke-width="4"/><path d="M29 5v13h12M7 18v22h30M10 33l8-6 6 4 10-8M10 39l8-4 8 2 10-8" fill="none" stroke="#0b7a12" stroke-width="2"/><rect x="32" y="50" width="32" height="13" fill="#0b7a12"/><text x="48" y="61" font-size="12" font-weight="700" font-family="Liberation Sans" fill="#fff" text-anchor="middle">PUB</text>',
  maker: '<path d="M4 2v34" stroke="#e33" stroke-width="5" stroke-dasharray="3 4"/><path d="M14 2v34" stroke="#3a6" stroke-width="5" stroke-dasharray="3 4"/><path d="M24 2v24" stroke="#36f" stroke-width="5" stroke-dasharray="3 4"/><path d="M5 57l28-20" stroke="#8a8300" stroke-width="9"/><path d="M46 17c-10-3-21 5-18 15s17 12 25 1l-8 1-6-6z" fill="#8a8300" stroke="#8a8300" stroke-width="2"/><rect x="32" y="48" width="8" height="14" fill="#e01010"/><rect x="44" y="44" width="8" height="18" fill="#3cb371"/><rect x="55" y="35" width="8" height="27" fill="#1b6fe0"/>',
  annot: '<circle cx="32" cy="32" r="31" fill="#338bfa"/><path d="M36 13H15q-6 0-6 6v26q0 6 6 6h26q6 0 6-6V34" fill="none" stroke="#0c1420" stroke-width="5"/><path d="M26 43l4-12 20-19 8 8-20 19z" fill="#0c1420"/><path d="M46 16l8 8" stroke="#338bfa" stroke-width="2"/>',
  fit: '<path d="M2 56V16q0-5 5-5h14l5 5h20q4 0 4 6v30z" fill="#fff" stroke="#cfdfee" stroke-width="2"/><path d="M16 22h46L50 56H2z" fill="#0f62a8"/><path d="M24 46l4-17h15M26 37h13" fill="none" stroke="#fff" stroke-width="4"/><circle cx="50" cy="49" r="11" fill="#0f62a8" stroke="#fff" stroke-width="2"/><path d="M50 42v14M43 49h14" stroke="#fff" stroke-width="3"/>',
}

/* ---------- plot geometry ---------- */
const decades = Array.from({ length: 25 }, (_, i) => 337 + Math.round(i * 37.1))
const yTicks = decades.map((y) => `M970 ${y}h18M970 ${y + 6}h9M970 ${y + 15}h9M2135 ${y}h-18M2135 ${y + 6}h-9M2135 ${y + 15}h-9`).join('')
const xTicks = [1103, 1436, 1768, 2101].map((x) => `M${x} 1267v-20M${x} 328v17`).join('') + [1269, 1601, 1934].map((x) => `M${x} 1267v-9M${x} 328v8`).join('')
const inTicks = [771, 824, 877, 931, 984, 1036, 1090, 1143].map((y) => `M1150 ${y}h7M1150 ${y + 8}h4M1150 ${y + 21}h4M1657 ${y}h-7M1657 ${y + 8}h-4M1657 ${y + 21}h-4`).join('')
  + [1227, 1415, 1601].map((x) => `M${x} 1196v-9M${x} 763v8`).join('') + [1321, 1507].map((x) => `M${x} 1196v-5M${x} 763v4`).join('')
const base = [[1044, 666], [1050, 646], [1060, 617], [1070, 588], [1082, 566], [1096, 546], [1103, 568], [1121, 558], [1154, 548], [1197, 540], [1241, 536], [1285, 535], [1329, 535], [1367, 539], [1398, 545], [1417, 554], [1431, 567], [1435, 485], [1442, 490], [1520, 497], [1637, 508], [1774, 520], [1911, 530], [2021, 536], [2101, 537]]
const shifted = (dy) => base.map(([x, y], i) => `${x - (i === 0 && dy > 50 ? 2 : 0)},${y - dy}`).join(' ')
const curves = [[0, '#515151'], [61, '#f14040'], [109, '#00ff00'], [116, '#ffb366'], [121, '#008000'], [119, '#9b8000']].map(([dy, col]) => ({ d: shifted(dy), col }))
const insetCurves = [
  ['#ffb366', '809,480 809,290 823,182 835,150 850,130 870,112 900,98 930,92 962,90 1000,93 1030,104 1050,120 1064,140 1076,170 1076,300'],
  ['#008000', '809,520 823,318 835,290 850,268 870,247 905,228 940,220 962,218 985,219 1020,228 1045,244 1060,262 1070,282 1076,298 1076,470 1088,399 1420,396'],
  ['#808000', '809,640 823,442 835,412 855,388 880,368 910,353 940,346 962,345 1000,349 1030,362 1050,378 1063,395 1076,425'],
  ['#00ff00', '1076,575 1088,490 1220,488 1420,481'],
  ['#00ffff', '809,740 823,693 835,667 850,647 870,630 900,615 940,609 980,609 1010,619 1035,636 1050,655 1062,685 1076,865 1076,560'],
  ['#ff00ff', '811,700 823,570 835,540 850,520 875,500 905,482 940,473 968,471 1000,475 1030,487 1050,503 1063,522 1070,538 1076,552 1076,490'],
  ['#9b8000', '809,1022 809,480'],
  ['#9b8000', '1076,300 1076,492 1088,397 1420,394'],
  ['#f14040', '1088,810 1103,784 1130,773 1170,764 1260,750 1340,738 1420,727'],
  ['#515151', '1288,937 1302,878 1320,848 1345,826 1375,810 1400,802 1420,799'],
]
const yLabels = [[834, 488, '21'], [834, 673, '16'], [834, 859, '11'], [861, 1044, '6'], [861, 1231, '1']]
const inLabels = [[1067, 794, '21'], [1067, 952, '18'], [1067, 1112, '15']]
const legendPos = plots.map(([n, col], i) => ({ n, col, x: 1195 + (i % 3) * 281, y: 608 + Math.floor(i / 3) * 56 }))
</script>

<template>
  <div class="app">
    <header class="title">
      <svg class="logo" viewBox="0 0 32 56"><path d="M9 2h22v38H9z" fill="#dff0fb" stroke="#9ccbe8" /><path d="M16 2v38M24 2v38M9 12h22M9 22h22M9 32h22" stroke="#9ccbe8" /><ellipse cx="14" cy="30" rx="13" ry="16" fill="#e2604e" /><path d="M6 38l6-12 5 6 6-14" fill="none" stroke="#5b2a2a" stroke-width="2" /></svg>
      <h1>Ge_Si_wafer_bonding_dark_poly-Ge_2nm_recombination_rate.opju - D:\资料\111毕设材料\program\Origin_Graph_2024\ - /Folder1/ - OriginPro 2024 - [Graph1]</h1>
      <div class="wbtn">
        <button type="button" aria-label="minimize"><svg viewBox="0 0 20 20"><path d="M0 10h20" stroke="#000" stroke-width="2" /></svg></button>
        <button type="button" aria-label="restore"><svg viewBox="0 0 20 20"><rect x="1" y="4" width="15" height="15" rx="3" fill="none" stroke="#000" stroke-width="2" /><path d="M5 1h10q4 0 4 4v10" fill="none" stroke="#000" stroke-width="2" /></svg></button>
        <button type="button" aria-label="close"><svg viewBox="0 0 20 20"><path d="M0 0l20 20M20 0L0 20" stroke="#000" stroke-width="2" /></svg></button>
      </div>
    </header>

    <nav class="menu">
      <svg class="doc" viewBox="0 0 16 16"><path d="M.5.5h14v15H.5z" fill="#fff" stroke="#000" /><path d="M2 2h11v12H2z" fill="#0ff" /><path d="M2 8h11M2 1v14" stroke="#f22" /><path d="M4 6l2-2 1 1 2-2 3 2" fill="none" stroke="#000" /><path d="M4 13c2-3 5-1 8-4" fill="none" stroke="#93f" /></svg>
      <a v-for="m in menus" :key="m[1]" href="#">{{ m[0] }}(<u>{{ m[1] }}</u>)</a>
      <div class="mdi">
        <button type="button" aria-label="minimize document"><svg viewBox="0 0 14 18"><path d="M1 15h12" stroke="#000" stroke-width="3" /></svg></button>
        <button type="button" aria-label="restore document"><svg viewBox="0 0 14 18"><path d="M5 6V2h8v7H10M1 7h8v9H1z" fill="none" stroke="#000" stroke-width="2" /><path d="M5 2h8M1 8h8" stroke="#000" stroke-width="3" /></svg></button>
        <button type="button" aria-label="close document"><svg viewBox="0 0 14 18"><path d="M1 3l12 12M13 3L1 15" stroke="#000" stroke-width="3" /></svg></button>
      </div>
    </nav>

    <div v-for="(row, i) in topRows" :key="i" class="row">
      <ToolBar v-for="b2 in row" :key="b2" :t="b2" />
    </div>

    <main class="body">
      <aside class="logs">
        <button type="button">消息日志</button>
        <button type="button">提示日志&nbsp; (8)</button>
      </aside>
      <aside class="left">
        <ToolBar v-for="(b2, i) in leftBars" :key="i" :t="b2" side="1" :class="{ slim: i === 2 }" />
      </aside>

      <section class="middle">
        <div class="work">
          <section class="project">
            <header class="cap">
              <h2>项目管理器 (1)</h2>
              <svg viewBox="0 0 64 20"><path d="M0 6h18l-9 9z" /><path d="M29 2h10v9h3v2h-6v6h-2v-6h-6v-2h3V2M33 4v7h2V4z" fill-rule="evenodd" /><path d="M51 3l13 14M64 3L51 17" stroke="#000" stroke-width="3" /></svg>
            </header>
            <div class="tree">
              <div class="root"><svg viewBox="0 0 34 28"><path d="M0 5h6l3-4h8l3 4h13v22H0z" fill="#cfc3a4" stroke="#5a5344" /></svg><span>Ge_Si_wafer_bonding_dark_poly-Ge_2nm_rec</span></div>
              <div class="child"><svg viewBox="0 0 34 28"><path d="M2 24V3h10l3 4h14v4" fill="#e8cf7c" stroke="#a88a2c" /><path d="M2 25l6-14h25l-7 14z" fill="#d9b44c" stroke="#8f6f1c" /></svg><span>Folder1</span></div>
              <div class="hbar"><i></i></div>
            </div>
            <div class="list">
              <table>
                <thead><tr><th>名称<span class="up"></span></th><th>大小</th><th>注释</th><th></th></tr></thead>
                <tbody>
                  <tr v-for="x in files" :key="x.n" :class="{ bold: x.bold }">
                    <td>
                      <svg viewBox="0 0 16 16">
                        <template v-if="x.g"><path d="M1 1h15v15H1z" /><path d="M.5.5h14v14H.5z" fill="#fff" :stroke="x.bold ? '#f0f' : '#000'" /><path d="M2 2h11v11H2z" fill="#2ee" stroke="#e22" /><path d="M2 7.500h11" stroke="#e22" /><path d="M4 6l2-2 1 1 3-2 1 2M4 12l4-3h4" fill="none" stroke="#113" /></template>
                        <template v-else><path d="M1 1h15v15H1z" /><path d="M0 0h15v15H0z" fill="#20309a" /><path d="M1 1h13v3H1z" fill="#fff" /><path d="M1 5h4v2H1zM6 5h3v2H6zM10 5h4v2h-4zM1 8h4v2H1zM6 8h3v2H6zM10 8h4v2h-4zM1 11h4v3H1zM6 11h3v3H6zM10 11h4v3h-4z" fill="#3be34b" /><path d="M2 3l1-1 1 1M7 2v2M11 2h2" fill="none" stroke="#e22" /></template>
                      </svg>{{ x.n }}
                    </td>
                    <td>{{ x.s }}</td><td></td><td></td>
                  </tr>
                </tbody>
              </table>
              <div class="cols"><i></i><i></i><i></i></div>
            </div>
          </section>

          <section class="graph">
            <div class="layers"><button type="button" class="sel">1</button><button type="button">2</button></div>
            <svg class="plot" viewBox="663 175 1710 1308">
              <rect x="663" y="175" width="1710" height="1308" fill="#fff" />
              <path :d="'M970 328H2135V1267H970z' + yTicks" fill="none" stroke="#000" stroke-width="4" />
              <path :d="xTicks" fill="none" stroke="#000" stroke-width="3" />
              <g fill="none" stroke-width="10" stroke-linejoin="round" stroke-linecap="round">
                <path d="M1036 458V1216" stroke="#ffb366" />
                <polyline v-for="k in curves" :key="k.col" :points="k.d" :stroke="k.col" />
                <path d="M1041 540V712" stroke="#515151" stroke-width="3" /><path d="M1041 600V700" stroke="#0ff" stroke-width="2" />
                <path d="M1035 498V1218" stroke="#008000" /><path d="M1036 500V1214" stroke="#9b8000" stroke-width="9" />
              </g>
              <rect x="1005" y="437" width="66" height="283" fill="none" stroke="#f0f" stroke-opacity=".5" stroke-width="7" stroke-dasharray="22 11" />
              <path d="M1077 629L1155 745" stroke="#000" stroke-width="2" /><path d="M1161 758l-17-18 12-8z" />

              <g class="serif">
                <g font-size="80">
                  <text v-for="l in yLabels" :key="l[2]" :x="l[0]" :y="l[1]">10<tspan font-size="50" dy="-31">{{ l[2] }}</tspan></text>
                  <g text-anchor="middle"><text x="1100" y="1333">1.0</text><text x="1434" y="1333">1.5</text><text x="1764" y="1333">2.0</text><text x="2096" y="1333">2.5</text></g>
                </g>
                <g font-size="88"><text x="1274" y="1408">Position</text><text x="1824" y="1408" text-anchor="end">(μm)</text></g>
                <g transform="translate(821 1363) rotate(-90)" font-size="84">
                  <text x="0" y="0">Recombination</text><text x="556" y="0">Rate</text><text x="750" y="0">(cm</text>
                  <text x="877" y="-31" font-size="54">-3</text><text x="932" y="0">s</text><text x="972" y="-31" font-size="54">-1</text><text x="1026" y="0">)</text>
                </g>
                <g font-size="52"><text v-for="k in legendPos" :key="k.n" :x="k.x + 283" :y="k.y + 17" text-anchor="end">{{ k.n }}</text></g>
                <g font-size="68"><text x="1695" y="947">T = 300K</text><text x="1708" y="1020">λ= 1310nm</text><text x="1695" y="1102">I = 1.59W/cm<tspan x="2092" font-size="44" dy="-24">2</tspan></text><text x="1695" y="1174">V =0.95V<tspan font-size="44" x="1963" dy="18">br</tspan></text></g>
                <g font-size="29"><text x="1442" y="800">T = 300K</text><text x="1450" y="832">λ= 1310nm</text><text x="1442" y="867">I = 1.59W/cm<tspan x="1610" font-size="19" dy="-10">2</tspan></text><text x="1442" y="898">V =0.95V<tspan x="1556" font-size="19" dy="7">br</tspan></text></g>
                <g font-size="43"><text v-for="l in inLabels" :key="l[2]" :x="l[0]" :y="l[1]">10<tspan font-size="28" dy="-18">{{ l[2] }}</tspan></text>
                  <g text-anchor="middle"><text x="1214" y="1243">0.900</text><text x="1400" y="1243">0.902</text><text x="1588" y="1243">0.904</text></g></g>
              </g>
              <path d="M1276 1348H1832" stroke="#000" stroke-width="6" />
              <path d="M761 299v39M761 392v39M761 486V1363M747 338v53M747 432v54" stroke="#000" stroke-width="6" />
              <g v-for="k in legendPos" :key="k.n"><path :d="`M${k.x + 5} ${k.y}h99`" :stroke="k.col" stroke-width="9" stroke-linecap="round" /><path :d="`M${k.x + 106} ${k.y - 22}h178`" stroke="#000" stroke-width="4" /></g>
              <path d="M1696 896h266M1696 968h332M1696 1051h400M2092 1041h24M1696 1124h264M1962 1159h46" stroke="#000" stroke-width="5" />
              <path d="M1442 778h113M1442 809h141M1442 844h168M1610 840h10M1442 875h113M1556 889h18" stroke="#000" stroke-width="2" />
              <path :d="'M1150 763H1657V1196H1150z' + inTicks" fill="none" stroke="#000" stroke-width="3" />
              <g transform="translate(660 740) scale(.7015 .4464)" fill="none" stroke-width="4"><polyline v-for="(k, i) in insetCurves" :key="i" :points="k[1]" :stroke="k[0]" vector-effect="non-scaling-stroke" /></g>
            </svg>
          </section>

          <aside class="right"><ToolBar v-for="(b2, i) in rightBars" :key="i" :t="b2" side="1" class="slim" /></aside>
        </div>
        <div class="row foot"><ToolBar v-for="b2 in bottomBars" :key="b2" :t="b2" /></div>
      </section>

      <aside class="dock">
        <header class="cap">
          <h2>对象管理器</h2>
          <svg viewBox="0 0 64 20"><path d="M0 6h18l-9 9z" /><path d="M29 2h10v9h3v2h-6v6h-2v-6h-6v-2h3V2M33 4v7h2V4z" fill-rule="evenodd" /><path d="M51 3l13 14M64 3L51 17" stroke="#000" stroke-width="3" /></svg>
        </header>
        <div class="objects">
          <div class="nodes">
            <div class="node head"><i class="minus"></i><svg viewBox="0 0 34 28"><path d="M2 24V3h10l3 4h14v4" fill="#f5e3a0" stroke="#a88a2c" /><path d="M2 25l6-14h25l-7 14z" fill="#f3cf6a" stroke="#a67c1c" /></svg><span>Graph1 - 绘图</span></div>
            <div class="node sub"><i class="minus"></i><label><input type="checkbox" checked />Layer1</label></div>
            <div v-for="(k, i) in plots" :key="k[0]" class="node leaf"><label :class="{ strong: i === 0 }"><input type="checkbox" checked /><i :style="{ background: k[1] }"></i>{{ k[0] }}</label></div>
            <div class="node sub"><i class="minus"></i><label><input type="checkbox" checked />Layer2</label></div>
            <div class="node leaf"><label><input type="checkbox" checked /><i :style="{ background: plots[0][1] }"></i>0.30eV</label></div>
          </div>
          <div class="vbar"><i></i></div>
        </div>
        <header class="cap apps-cap">
          <h2>Apps</h2>
          <svg viewBox="0 0 64 20"><path d="M0 6h18l-9 9z" /><path d="M29 2h10v9h3v2h-6v6h-2v-6h-6v-2h3V2M33 4v7h2V4z" fill-rule="evenodd" /><path d="M51 3l13 14M64 3L51 17" stroke="#000" stroke-width="3" /></svg>
        </header>
        <div class="apps">
          <div class="tabs">
            <svg viewBox="0 0 42 112"><path d="M25 174L4 183V248L42 267" fill="#f0f0f0" stroke="#777" /><path d="M42 104L4 121V163L42 182z" fill="#fff" stroke="#777" /><path d="M14 8h16M14 19l8-8 8 8zM14 43l8-8 8 8zM14 61l8 8 8-8zM14 83l8 8 8-8zM14 94h16" stroke="#000" stroke-width="2" /></svg>
            <button type="button" class="sel">所有</button><button type="button">连接器</button>
          </div>
          <div class="cells">
            <button v-for="a in apps" :key="a[1]" type="button"><svg viewBox="0 0 64 64" v-html="appArt[a[1]]"></svg><span>{{ a[0] }}</span></button>
          </div>
        </div>
      </aside>
    </main>

    <footer class="status">
      <span class="menu1">&lt;&lt;&nbsp; 【开始】菜单 (F1)</span>
      <span>--</span><span class="gap"></span><span>AU : 开</span><span>Light Grids</span><span>1:[Book2]export1!Col("Recombination</span>
    </footer>
    <svg class="orb" viewBox="0 0 60 60"><circle cx="24" cy="36" r="23" fill="#dd9c90" /><circle cx="27" cy="22" r="19" fill="#cfdcf6" fill-opacity=".75" stroke="#2a5fe0" stroke-width="5" /><path d="M41 38l14 16" stroke="#5b7fd8" stroke-width="8" stroke-linecap="round" /><path d="M14 30l8-10 6 4 10-10" fill="none" stroke="#4464b8" stroke-width="2" /></svg>

    <div class="mark zoom-box"></div>
    <div class="mark file-box"></div>
    <div class="mark curve-box"></div>
    <div class="note one"><b>1</b><p>点击放大镜</p></div>
    <div class="note two"><b>2</b><p>按住“Ctrl键”进行位置框选</p></div>
    <div class="note three"><b>3</b><p>自动生成放大图，对其进行修改之后，<br />复制粘贴到主图<br />注：字号调整为48号为佳</p></div>
    <div class="note four"><b>4</b><p>最后对摆放细节进行微调即可</p></div>

    <div class="ime">
      <svg class="sogou" viewBox="0 0 64 60"><path d="M6 8l46-7 11 40q1 8-7 10L18 59q-8 1-9-6L1 17q0-7 5-9z" fill="#f4511e" /><path d="M48 15c-14-9-34-2-29 8 4 8 30 2 27 14-3 9-20 10-32 1" fill="none" stroke="#fff" stroke-width="7" /></svg>
      <b>英</b>
      <svg viewBox="0 0 32 32"><circle cx="10" cy="11" r="4" fill="#0f6fde" /><path d="M20 17h7v5l-5 7v-6h-2z" fill="#0f6fde" /></svg>
      <svg viewBox="0 0 32 32"><rect x="11" y="1" width="10" height="18" rx="5" fill="#0f6fde" /><path d="M6 13q0 10 10 10t10-10M16 23v7M10 30h12" fill="none" stroke="#0f6fde" stroke-width="3" /></svg>
      <svg viewBox="0 0 32 32"><rect x="2" y="4" width="28" height="23" rx="3" fill="none" stroke="#0f6fde" stroke-width="3" /><path d="M7 11h3M13 11h3M19 11h6M7 16h3M13 16h3M19 16h6M9 22h14" stroke="#0f6fde" stroke-width="3" /></svg>
      <svg viewBox="0 0 32 32"><path d="M2 6l8-3q6 5 12 0l8 3-3 8h-4v15H9V14H4z" fill="#a06cf0" /><circle cx="28" cy="4" r="4" fill="#f65" /></svg>
      <svg viewBox="0 0 32 32"><path d="M3 3h12v12H3zM3 18h12v12H3zM18 18h12v12H18z" fill="#0f6fde" /><circle cx="24" cy="9" r="6" fill="#0f6fde" /></svg>
      <svg viewBox="0 0 32 32"><path d="M2 18q8-14 26-8l-8 12q-10 4-18-4z" fill="#f0762c" /><path d="M14 14l6 2-4 6" stroke="#222" stroke-width="3" fill="none" /><path d="M28 2l2 4 2 1-3 2-1 4-2-4-3-2 3-1z" fill="#fc3" /></svg>
    </div>
    <div class="water">CSDN @电子科技小筑</div>
  </div>
</template>

<style>
body { overflow: hidden; background: #f0f3fd; }
</style>
<style scoped>
.app { position: relative; display: flex; flex-direction: column; height: 100vh; overflow: hidden; font-family: "Noto Sans", "Noto Sans CJK SC", sans-serif; font-size: 22px; color: #000; background: linear-gradient(90deg, #ebebfb, #f3f6fe 60%); }
.app *, .app :deep(*) { box-sizing: border-box; }
button, .app :deep(button) { padding: 0; border: 0; background: none; font: inherit; color: inherit; }
h1, h2, p { margin: 0; font-weight: 400; }
svg { display: block; flex: none; }

.title { display: flex; align-items: center; flex: none; height: 45px; padding-right: 38px; background: #eff4fa; }
.title .logo { width: 32px; height: 56px; margin: 8px 5px 0 2px; }
.title h1 { flex: 1; font-size: 23px; line-height: 30px; white-space: nowrap; padding-top: 2px; }
.wbtn { display: flex; gap: 72px; }
.wbtn svg { width: 20px; height: 20px; }

.menu { display: flex; align-items: center; flex: none; height: 42px; gap: 17px; padding: 0 11px 2px 5px; }
.menu .doc { width: 32px; height: 32px; margin: 0 -4px 0 5px; }
.menu a { color: #000; text-decoration: none; font-size: 23px; white-space: nowrap; }
.mdi { display: flex; gap: 22px; margin-left: auto; }
.mdi svg { width: 15px; height: 18px; }

.row { display: flex; flex: none; height: 43px; }
.foot { height: 45px; border-bottom: 1px solid #d5d8e6; }
.app :deep(.bar) { display: flex; }
.app :deep(.flat) { align-items: center; height: 43px; border-bottom: 2px solid #9a9ab4; border-radius: 3px 5px 5px 3px; background: linear-gradient(#f6f9ff, #e9ecf8 40%, #b3b3cb); }
.app :deep(.grip) { flex: none; width: 10px; height: 20px; background: radial-gradient(circle at 5px 2px, #8f8fa8 1px, transparent 2px) 0 0 / 10px 5px; }
.app :deep(.btn) { display: flex; flex: none; align-items: center; justify-content: center; width: 39px; height: 39px; }
.app :deep(.on) { background: #d3e8f8; border: 2px solid #0078d7; }
.app :deep(.ic) { width: 32px; height: 32px; flex: none; overflow: visible; }
.app :deep(.sep) { flex: none; width: 8px; height: 28px; border-left: 1px solid #c5c8d8; margin-left: 4px; margin-right: -4px; }
.app :deep(.drop) { display: flex; flex: none; align-items: center; justify-content: center; width: 18px; height: 39px; }
.app :deep(.drop.wide) { width: 22px; }
.app :deep(.tri) { border: 6px solid transparent; border-top: 8px solid #000; border-bottom: 0; }
.app :deep(.tri.dim) { border-top-color: #77777f; }
.app :deep(.over) { display: flex; flex-direction: column; align-items: center; justify-content: flex-end; gap: 4px; flex: none; width: 22px; height: 43px; padding-bottom: 5px; background: linear-gradient(#b2b2cc, #d5d6e8 50%, #f1f3fd); }
.app :deep(.over i) { width: 11px; height: 3px; background: #000; }
.app :deep(.over b) { border: 6px solid transparent; border-top: 7px solid #000; border-bottom: 0; }
.app :deep(.combo) { position: relative; display: flex; align-items: center; flex: none; width: 118px; height: 36px; border: 1px solid #a0a3b0; background: #f0f0f0; margin: 0 3px 0 1px; }
.app :deep(.combo select) { flex: 1; width: 100%; height: 34px; appearance: none; border: 0; padding: 0 3px; background: none; font: inherit; font-size: 22px; color: #6d6d6d; }
.app :deep(.combo .tri) { position: absolute; right: 10px; }
.app :deep(.combo.zoom) { margin: 0 3px 0 5px; border: 0; background: linear-gradient(90deg, #fff 86px, #c6c8db 86px); }
.app :deep(.combo.zoom select) { color: #000; }
.app :deep(.combo.tt) { width: 255px; margin-left: 3px; }
.app :deep(.combo.ls) { margin-left: 4px; }
.app :deep(.combo.ls .stroke) { width: 62px; height: 3px; margin-left: 4px; background: #000; flex: none; }
.app :deep(.combo.swatch) { width: 36px; margin: 0 32px 0 13px; border: 2px solid #fff; background: #d8dbe8; }
.app :deep(.combo.swatch .tri) { right: -28px; }
.app :deep(.ttf) { width: 34px; text-align: center; font: 700 28px "Liberation Serif", serif; }

.app :deep(.side) { flex-direction: column; width: 60px; background: linear-gradient(90deg, #f6f9ff, #e6e9f6 50%, #adadc6); border-right: 1px solid #9a9ab4; border-left: 1px solid #c6c6da; border-radius: 4px; }
.app :deep(.slim) { width: 43px; }
.app :deep(.side .grip) { width: 100%; height: 10px; background: radial-gradient(circle at 2px 5px, #8f8fa8 1px, transparent 2px) 12px 0 / 5px 10px; }
.app :deep(.side .sep) { width: 28px; height: 8px; border-left: 0; border-top: 1px solid #b6bacb; margin: 4px 0 -4px 12px; }
.app :deep(.side .pair) { display: flex; }
.app :deep(.side .over) { width: 100%; height: 22px; flex-direction: row; align-items: center; padding: 0 4px; gap: 3px; background: linear-gradient(90deg, #e8e9f6, #b8b8d0); }
.app :deep(.side .over i) { width: 3px; height: 11px; }
.app :deep(.side .over b) { border: 6px solid transparent; border-left: 8px solid #000; border-right: 0; }

.body { display: flex; flex: 1; min-height: 0; }
.logs { display: flex; flex-direction: column; gap: 15px; width: 38px; padding: 4px 3px 0 0; }
.logs button { writing-mode: vertical-rl; text-orientation: sideways; width: 35px; height: 130px; padding-top: 6px; text-align: left; border: solid #aeb0ba; border-width: 0 1px 1px 0; background: #f2f2f4; color: #7f7f7f; font-size: 24px; line-height: 35px; white-space: nowrap; }
.logs button + button { height: 177px; }
.left { display: flex; flex-direction: column; width: 60px; }
.middle { display: flex; flex-direction: column; flex: 1; min-width: 0; }
.work { display: flex; flex: 1; min-height: 0; }
.right { width: 49px; padding: 0 0 0 1px; }

.cap { display: flex; align-items: center; justify-content: space-between; flex: none; height: 41px; padding: 0 9px 0 4px; background: linear-gradient(#bfccda, #d7e4f1); }
.cap h2 { font-size: 24px; line-height: 40px; }
.cap svg { width: 66px; height: 20px; }
.project { display: flex; flex-direction: column; width: 559px; flex: none; margin: 0 4px 0 1px; }
.tree { display: flex; flex-direction: column; height: 242px; flex: none; border: 1px solid #9aa0aa; background: #fff; white-space: nowrap; overflow: hidden; }
.tree svg { width: 34px; height: 28px; margin-right: 4px; }
.root, .child { display: flex; align-items: center; height: 34px; font-size: 24px; padding-left: 3px; }
.child { align-self: flex-start; height: 32px; margin-left: 37px; padding: 0 8px 0 0; background: #d6d6d6; }
.hbar { margin-top: auto; height: 34px; padding: 7px 0 0 35px; background: #f0f0f0; }
.hbar i { display: block; width: 362px; height: 19px; background: #858585; }
.list { position: relative; flex: 1; margin-top: 4px; border: 1px solid #9aa0aa; background: #fff; overflow: hidden; }
.list table { border-collapse: collapse; table-layout: fixed; width: 100%; }
.list th { height: 38px; padding: 3px 0 0 5px; text-align: left; font-weight: 400; font-size: 24px; line-height: 30px; }
.list th:nth-child(1) { width: 188px; }
.list th:nth-child(2) { width: 96px; }
.list th:nth-child(3) { width: 245px; }
.up { float: right; margin: 12px 14px 0 0; border: 4px solid transparent; border-bottom: 5px solid #888; border-top: 0; }
.list td { height: 35px; padding: 0 0 0 5px; white-space: nowrap; font-size: 24px; line-height: 34px; }
.list td svg { display: inline-block; width: 32px; height: 32px; vertical-align: -7px; margin-right: 2px; }
.bold { font-weight: 700; }
.cols { position: absolute; inset: 0; display: flex; pointer-events: none; }
.cols i { border-right: 2px solid #dbe9f8; width: 189px; }
.cols i + i { width: 96px; }
.cols i + i + i { width: 245px; }

.graph { position: relative; flex: 1; min-width: 0; border: solid #77777f; border-width: 2px 0 0 2px; background: #c0c0c0; }
.plot { width: 100%; height: auto; }
.serif { font-family: "Liberation Serif", serif; }
.layers { position: absolute; left: 0; top: 0; display: flex; }
.layers button { width: 39px; height: 38px; border: solid #a9a9a9; border-width: 0 1px 1px 0; background: #fff; color: #333; font: 700 32px "Liberation Sans", sans-serif; }
.layers .sel { background: #6699cc; color: #fff; }

.dock { display: flex; flex-direction: column; width: 458px; background: #f0f3fb; }
.objects { display: flex; height: 467px; flex: none; border: 1px solid #77777f; background: #fff; overflow: hidden; }
.nodes { flex: 1; padding-left: 1px; background: linear-gradient(#bbb, #bbb) 15px 40px / 1px 360px no-repeat, linear-gradient(#bbb, #bbb) 44px 80px / 1px 285px no-repeat; }
.node { display: flex; align-items: center; height: 40px; padding-left: 2px; white-space: nowrap; font-size: 23px; line-height: 36px; }
.node.head { background: #0078d7; color: #fff; border: 1px dotted #fff; font-size: 24px; padding-left: 1px; }
.node.head svg { width: 33px; height: 26px; margin: 0 3px; }
.node.sub { padding-left: 31px; }
.node.leaf { padding-left: 88px; }
.node label { display: flex; align-items: center; }
.strong { font-weight: 700; }
.leaf label i { width: 79px; height: 4px; margin-right: 1px; }
.minus { display: flex; align-items: center; width: 25px; height: 25px; border: 2px solid #9a9a9a; background: linear-gradient(#fff, #e8e8e8); }
.minus::after { content: ""; width: 13px; height: 3px; margin: auto; background: #3b57a5; }
.node input { appearance: none; width: 30px; height: 30px; margin: 0; border-radius: 5px; background: #005fb8; display: grid; place-items: center; }
.node.sub input { margin: 0 4px 0 3px; }
.node input::after { content: ""; width: 14px; height: 7px; border: solid #fff; border-width: 0 0 2px 2px; transform: rotate(-45deg); margin-top: -5px; }
.vbar { width: 35px; padding: 35px 0 0 8px; background: #f0f0f0; }
.vbar i { display: block; width: 19px; height: 240px; background: #858585; }
.apps-cap { margin-top: 4px; }
.apps { display: flex; flex: 1; min-height: 0; border-top: 1px solid #77777f; background: #f0f0f0; }
.tabs { display: flex; flex-direction: column; align-items: center; width: 42px; border-right: 1px solid #9a9a9a; }
.tabs svg { width: 42px; height: 112px; overflow: visible; }
.tabs button { position: relative; writing-mode: vertical-rl; text-orientation: sideways; width: 38px; height: 60px; font-size: 24px; line-height: 36px; }
.tabs button + button { height: 86px; }
.tabs .sel { font-weight: 700; }
.cells { flex: 1; display: grid; grid-template-columns: 150px 150px; grid-auto-rows: 150px; align-content: start; padding: 4px 0 0 2px; background: #fff; }
.cells button { display: flex; flex-direction: column; align-items: center; justify-content: flex-start; }
.cells svg { width: 64px; height: 64px; }
.cells span { margin-top: 4px; font-size: 24px; line-height: 31px; white-space: pre; }

.status { display: flex; align-items: center; flex: none; height: 37px; padding-right: 389px; background: #f0f0f0; border-top: 1px solid #c9ccd6; white-space: nowrap; font-size: 22px; }
.status span { padding: 0 6px; border-left: 1px solid #d3d3d3; line-height: 34px; }
.status .menu1 { flex: 1; padding-left: 59px; border: 0; font-size: 24px; }
.status .gap { width: 13px; height: 34px; padding: 0; }
.orb { position: absolute; left: 0; bottom: 0; width: 60px; height: 60px; }

.mark { position: absolute; border: 7px solid #fb3b3b; }
.zoom-box { left: 25px; top: 211px; width: 81px; height: 66px; }
.file-box { left: 65px; top: 466px; width: 374px; height: 76px; }
.curve-box { left: 968px; top: 398px; width: 148px; height: 373px; }
.note { position: absolute; display: flex; align-items: flex-start; gap: 18px; }
.note.one { left: 89px; top: 246px; }
.note.two { left: 1053px; top: 330px; }
.note.three { left: 430px; top: 480px; }
.note.four { left: 1706px; top: 764px; }
.note b { width: 40px; height: 40px; margin-top: 13px; border-radius: 20px; background: #fb3838; color: #fff; font-size: 26px; font-weight: 400; line-height: 38px; text-align: center; }
.note p { position: relative; padding: 11px 25px 13px 12px; border-radius: 3px; background: rgba(0, 0, 0, .6); color: #fff; font-family: "Noto Sans CJK SC", sans-serif; font-size: 32px; line-height: 43px; white-space: nowrap; }
.note p::before { content: ""; position: absolute; left: -10px; top: 23px; border: 10px solid transparent; border-right-color: rgba(0, 0, 0, .6); border-left: 0; }
.ime { position: absolute; right: 0; bottom: 3px; display: flex; align-items: center; gap: 16px; height: 52px; padding: 0 10px 0 0; border: 1px solid #bcd3ec; background: #fff; }
.ime svg { width: 32px; height: 32px; }
.ime .sogou { width: 62px; height: 60px; margin: -4px -4px 0 -2px; }
.ime b { color: #0f6fde; font-size: 28px; }
.water { position: absolute; right: 4px; bottom: 15px; font: 56px/70px "Noto Sans CJK SC", sans-serif; color: rgba(222, 222, 222, .7); text-shadow: 2px 2px 1px rgba(120, 120, 120, .6); white-space: nowrap; }
</style>
